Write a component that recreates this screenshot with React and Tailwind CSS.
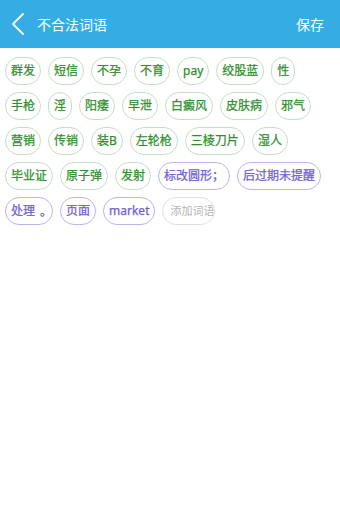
const words = [
  { t: '群发' }, { t: '短信' }, { t: '不孕' }, { t: '不育' }, { t: 'pay' }, { t: '绞股蓝' }, { t: '性' },
  { t: '手枪' }, { t: '淫' }, { t: '阳痿' }, { t: '早泄' }, { t: '白癜风' }, { t: '皮肤病' }, { t: '邪气' },
  { t: '营销' }, { t: '传销' }, { t: '装B' }, { t: '左轮枪' }, { t: '三棱刀片' }, { t: '湿人' },
  { t: '毕业证' }, { t: '原子弹' }, { t: '发射' }, { t: '标改圆形；', p: true }, { t: '后过期未提醒', p: true },
  { t: '处理', dot: true, p: true }, { t: '页面', p: true }, { t: 'market', p: true },
];

const Chip = ({ word }) => (
  <div
    className={
      word.p
        ? 'flex h-[28px] items-center rounded-full border border-[#bdb4ef] px-[5px] text-[12px] text-[#6f61d0] [-webkit-text-stroke:0.25px_#6f61d0]'
        : 'flex h-[28px] items-center rounded-full border border-[#c3dfc3] px-[5px] text-[12px] text-[#2e8f2e] [-webkit-text-stroke:0.25px_#2e8f2e]'
    }
  >
    {word.t}
    {word.dot && <span className="inline-block translate-x-[5px] translate-y-[1px]">。</span>}
  </div>
);

export default function App() {
  return (
    <div
      className="min-h-[521px] w-[340px] bg-white"
      style={{ fontFamily: '"Noto Sans", "Noto Sans CJK SC", sans-serif' }}
    >
      <div className="flex h-[48px] items-center bg-[#35ade3] pr-[16px] text-white">
        <svg width="14" height="24" viewBox="0 0 14 24" className="ml-[11px]" fill="none">
          <polyline points="12,2 2,12 12,22" stroke="white" strokeWidth="1.8" strokeLinecap="round" strokeLinejoin="round" />
        </svg>
        <span className="ml-[12px] text-[14px]">不合法词语</span>
        <span className="ml-auto text-[14px]">保存</span>
      </div>

      <div className="flex flex-wrap gap-x-[7px] gap-y-[7px] px-[5px] pt-[9px]">
        {words.map((w) => (
          <Chip key={w.t} word={w} />
        ))}
        <div className="flex h-[28px] w-[53px] items-center overflow-hidden rounded-full border border-[#e0e0e0] pl-[6px] text-[11px] text-[#b4b4b4]">
          <span className="mr-[1px] h-[14px] w-[1px] bg-[#777]" />
          <span className="whitespace-nowrap">添加词语</span>
        </div>
      </div>
    </div>
  );
}
